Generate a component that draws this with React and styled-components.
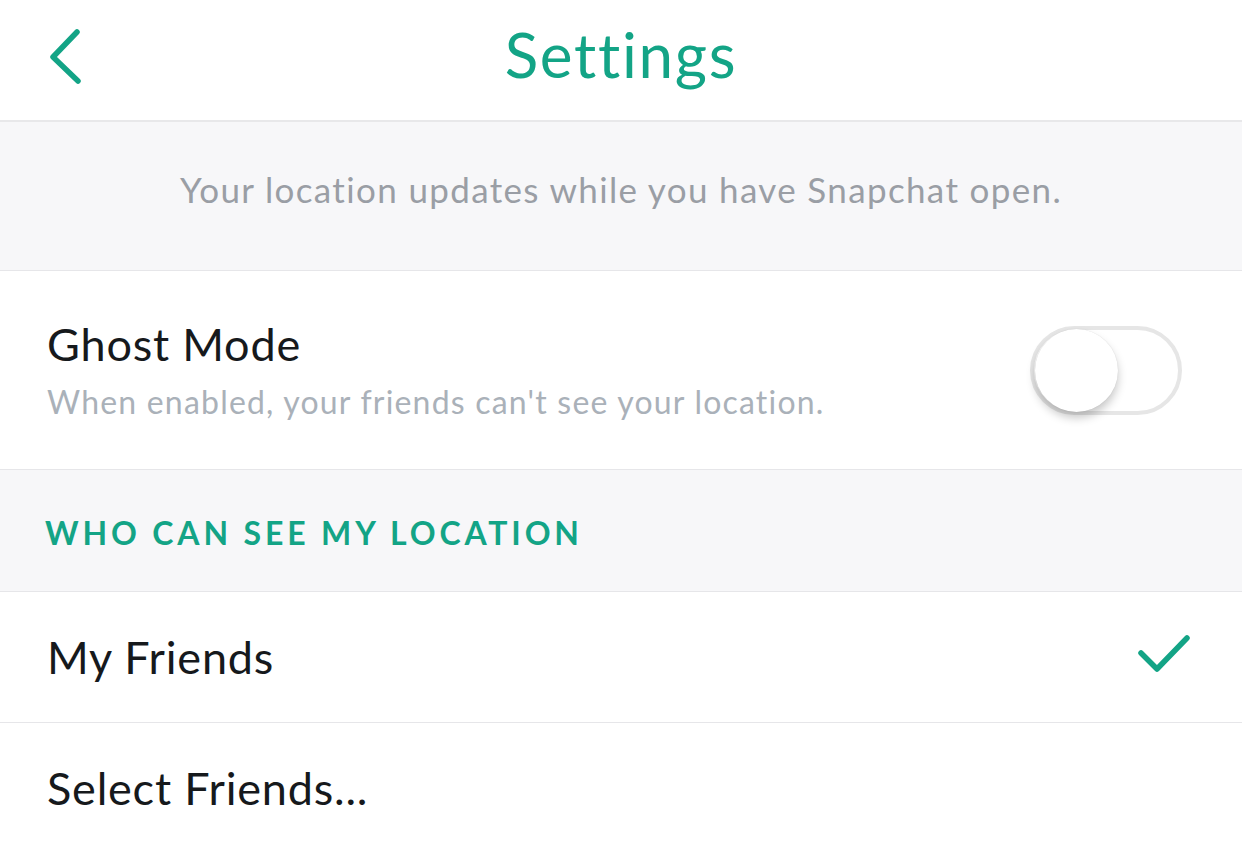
import React from 'react';
import styled, { createGlobalStyle } from 'styled-components';

const GREEN = '#13a486';

const Global = createGlobalStyle`
  body {
    margin: 0;
    background: #fff;
    font-family: Lato, "Noto Sans", sans-serif;
    -webkit-font-smoothing: antialiased;
  }
`;

const Page = styled.div`
  width: 1242px;
  height: 852px;
  overflow: hidden;
  background: #fff;
`;

const Header = styled.header`
  position: relative;
  height: 120px;
  display: flex;
  align-items: center;
  justify-content: center;
  border-bottom: 2px solid #e8e8ea;
`;

const BackButton = styled.button`
  position: absolute;
  left: 44px;
  top: 24px;
  width: 44px;
  height: 66px;
  padding: 0;
  border: 0;
  background: none;
  cursor: pointer;
  svg { display: block; }
`;

const Title = styled.h1`
  margin: 0;
  font-size: 62px;
  font-weight: 400;
  color: ${GREEN};
  letter-spacing: 1.7px;
  transform: translateY(-6px);
`;

const Notice = styled.div`
  height: 149px;
  background: #f7f7f9;
  display: flex;
  align-items: center;
  justify-content: center;
  padding-bottom: 14px;
  box-sizing: border-box;
  font-size: 35px;
  letter-spacing: 1.35px;
  color: #9a9ea5;
  border-bottom: 1px solid #e6e6e9;
`;

const Row = styled.div`
  height: ${({ tall }) => (tall ? 199 : 131)}px;
  box-sizing: border-box;
  display: flex;
  align-items: center;
  justify-content: space-between;
  padding: 0 ${({ tall }) => (tall ? 60 : 48)}px 0 47px;
  border-bottom: 1px solid #e6e6e9;
  background: #fff;
`;

const Labels = styled.div`
  display: flex;
  flex-direction: column;
  gap: 12px;
  margin-top: -2px;
`;

const Label = styled.div`
  font-size: 45px;
  color: #16191c;
  line-height: 1.2;
  letter-spacing: 0.8px;
`;

const Hint = styled.div`
  font-size: 32px;
  color: #aab1b9;
  line-height: 1.2;
  letter-spacing: 1.2px;
`;

const Track = styled.div`
  width: 152px;
  height: 89px;
  box-sizing: border-box;
  border: 4px solid #e6e6e6;
  border-radius: 45px;
  display: flex;
  align-items: center;
  padding-left: 1px;
`;

const Knob = styled.div`
  width: 83px;
  height: 83px;
  border-radius: 50%;
  background: #fff;
  box-shadow: 0 6px 10px rgba(0, 0, 0, 0.22), 0 0 1px rgba(0, 0, 0, 0.15);
`;

const SectionTitle = styled.div`
  height: 122px;
  background: #f7f7f9;
  display: flex;
  align-items: center;
  padding-left: 45px;
  padding-top: 3px;
  box-sizing: border-box;
  font-size: 32px;
  font-weight: 700;
  letter-spacing: 3.85px;
  color: ${GREEN};
  border-bottom: 1px solid #e6e6e9;
`;

const Chevron = () => (
  <svg width="44" height="66" viewBox="0 0 44 66">
    <polyline
      points="33,8 9,33 34,57"
      fill="none"
      stroke={GREEN}
      strokeWidth="5.5"
      strokeLinecap="round"
      strokeLinejoin="round"
    />
  </svg>
);

const Check = () => (
  <svg width="60" height="50" viewBox="0 0 60 50">
    <polyline
      points="7,21 23,37 53,6"
      fill="none"
      stroke={GREEN}
      strokeWidth="5.5"
      strokeLinecap="round"
      strokeLinejoin="round"
    />
  </svg>
);

export default function App() {
  return (
    <Page>
      <Global />
      <Header>
        <BackButton aria-label="Back">
          <Chevron />
        </BackButton>
        <Title>Settings</Title>
      </Header>
      <Notice>Your location updates while you have Snapchat open.</Notice>
      <Row tall>
        <Labels>
          <Label>Ghost Mode</Label>
          <Hint>When enabled, your friends can't see your location.</Hint>
        </Labels>
        <Track>
          <Knob />
        </Track>
      </Row>
      <SectionTitle>WHO CAN SEE MY LOCATION</SectionTitle>
      <Row>
        <Label>My Friends</Label>
        <Check />
      </Row>
      <Row>
        <Label>Select Friends...</Label>
      </Row>
    </Page>
  );
}
